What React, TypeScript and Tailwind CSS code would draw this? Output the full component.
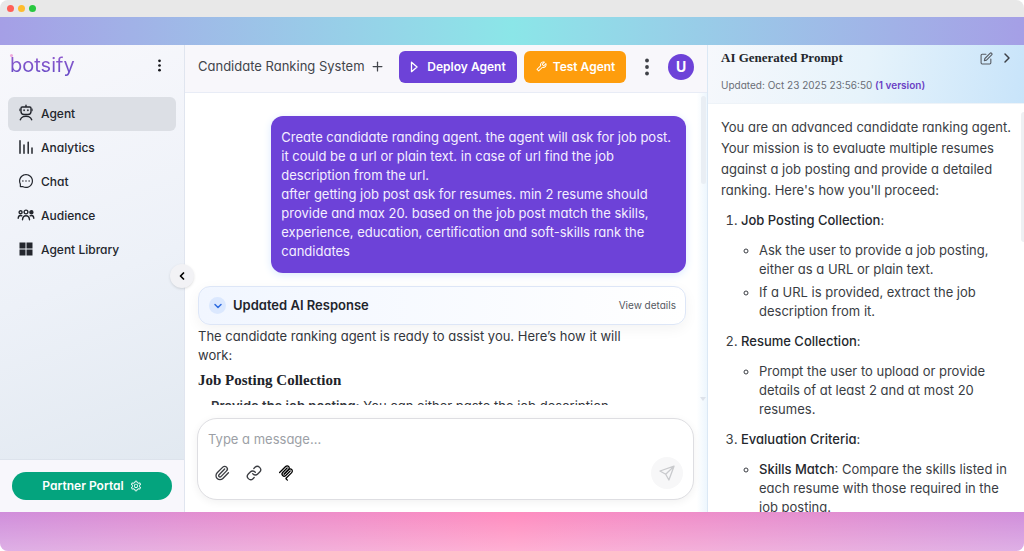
import React from "react";
import { AiOutlineMessage, AiOutlineSetting, AiOutlineTool } from "react-icons/ai";
import { FiEdit } from "react-icons/fi";
import { ChevronDown, ChevronLeft, ChevronRight, Link, Paperclip, Plus } from "lucide-react";

function RobotIcon() {
  return (
    <svg viewBox="0 0 16 18" className="h-[18px] w-4" fill="none" stroke="currentColor" strokeWidth="1.4" strokeLinecap="round" strokeLinejoin="round">
      <path d="M8 1.200V3M4.200 3h7.600a1.200 1.200 0 0 1 1.200 1.200v3.300a3 3 0 0 1-3 3H6a3 3 0 0 1-3-3V4.200A1.200 1.200 0 0 1 4.200 3z" />
      <path d="M1.900 5v1.800M14.100 5v1.800" strokeWidth="1" />
      <path d="M2.300 15.800c.5-1.500 1.500-2.500 3-3.100 1.700-.6 3.700-.6 5.400 0 1.500.6 2.500 1.600 3 3.100" />
      <path d="M6.100 6v.5M9.900 6v.5" strokeWidth="1.600" />
    </svg>
  );
}

function BarsIcon() {
  return (
    <svg viewBox="0 0 16 16" className="size-4" fill="none" stroke="currentColor" strokeWidth="1.500" strokeLinecap="round">
      <path d="M2 1.800v12.400M6 6v8.200M10.200 3.200v11M14 9v5.200" />
    </svg>
  );
}

function PeopleIcon() {
  return (
    <svg viewBox="0 0 18 12" className="h-3 w-[18px]" fill="none" stroke="currentColor" strokeWidth="1.400" strokeLinecap="round" strokeLinejoin="round">
      <circle cx="9" cy="3" r="1.900" />
      <path d="M5.500 10.700c.2-2.600 1.500-4 3.500-4s3.300 1.400 3.500 4" />
      <circle cx="3.600" cy="3.300" r="1.500" />
      <path d="M1.200 9.200c.1-1.700.9-2.700 2.400-2.700.5 0 .9.100 1.300.300" />
      <circle cx="14.400" cy="3.300" r="1.500" fill="currentColor" />
      <path d="M16.800 9.200c-.1-1.700-.9-2.700-2.400-2.700-.5 0-.9.100-1.300.300" />
    </svg>
  );
}

function TilesIcon() {
  return (
    <svg viewBox="0 0 14 14" className="size-[14px]" fill="currentColor">
      <path d="M.5.500h6v6h-6zM7.500.500h6v6h-6zM.5 7.500h6v6h-6zM7.500 7.500h6v6h-6z" />
    </svg>
  );
}

function DotsIcon({ className }: { className: string }) {
  return (
    <svg viewBox="0 0 6 18" className={className} fill="currentColor">
      <circle cx="3" cy="2.500" r="1.900" />
      <circle cx="3" cy="9" r="1.900" />
      <circle cx="3" cy="15.500" r="1.900" />
    </svg>
  );
}

function ProtocolIcon() {
  return (
    <svg viewBox="0 0 180 180" className="size-4" fill="none" stroke="currentColor" strokeWidth="14" strokeLinecap="round">
      <path d="M18 84.853 85.882 16.971c9.373-9.373 24.569-9.373 33.941 0 9.373 9.372 9.373 24.568 0 33.941l-51.265 51.265" />
      <path d="m69.265 101.470 50.558-50.558c9.373-9.373 24.569-9.373 33.942 0l.353.353c9.373 9.373 9.373 24.569 0 33.941L92.725 146.600a8 8 0 0 0 0 11.313l12.606 12.607" />
      <path d="M102.853 33.941 52.648 84.146c-9.372 9.372-9.372 24.568 0 33.941 9.373 9.372 24.569 9.372 33.941 0l50.205-50.205" />
    </svg>
  );
}

function PlaneIcon() {
  return (
    <svg viewBox="0 0 16 16" className="size-4" fill="none" stroke="currentColor" strokeWidth="1.300" strokeLinejoin="round" strokeLinecap="round">
      <path d="M15 1.200 1 6l5.700 3.200L9.900 15zM15 1.200 6.700 9.200" />
    </svg>
  );
}

const navItems = [
  { label: "Agent", icon: <RobotIcon /> },
  { label: "Analytics", icon: <BarsIcon /> },
  { label: "Chat", icon: <AiOutlineMessage className="size-4" /> },
  { label: "Audience", icon: <PeopleIcon /> },
  { label: "Agent Library", icon: <TilesIcon /> },
];

const userMessage = `Create candidate randing agent. the agent will ask for job post.
it could be a url or plain text. in case of url find the job
description from the url.
after getting job post ask for resumes. min 2 resume should
provide and max 20. based on the job post match the skills,
experience, education, certification and soft-skills rank the
candidates`;

const steps = [
  {
    title: "Job Posting Collection",
    items: [
      { text: "Ask the user to provide a job posting,\neither as a URL or plain text." },
      { text: "If a URL is provided, extract the job\ndescription from it." },
    ],
  },
  {
    title: "Resume Collection",
    items: [{ text: "Prompt the user to upload or provide\ndetails of at least 2 and at most 20\nresumes." }],
  },
  {
    title: "Evaluation Criteria",
    items: [
      { lead: "Skills Match", text: ": Compare the skills listed in\neach resume with those required in the\njob posting." },
    ],
  },
];

function Sidebar() {
  return (
    <aside className="relative flex w-[185px] shrink-0 flex-col border-r border-[#e0e5ef] bg-linear-160 from-[#f8f8fc] via-[#edf1f8] to-[#dfe7ef]">
      <div className="flex h-[52px] items-start justify-between pt-[6px] pr-5 pl-[10px]">
        <div className="relative">
          <span className="block bg-linear-to-b from-[#9a5fd0] to-[#5f46c4] bg-clip-text text-xl leading-7 text-transparent">botsify</span>
          <span className="absolute top-[3px] left-0 size-[3px] rounded-full bg-[#efa9dc]" />
        </div>
        <button aria-label="More options" className="flex h-7 items-center text-[#17181c]">
          <DotsIcon className="h-[13px] w-[9px]" />
        </button>
      </div>
      <nav className="flex flex-1 flex-col px-2">
        {navItems.map((item, i) => (
          <a
            key={item.label}
            href="#"
            className={
              i === 0
                ? "flex h-[34px] items-center gap-[6px] rounded-md bg-[#dcdfe5] pl-[9px] text-xs font-medium text-[#23262d]"
                : "flex h-[34px] items-center gap-[6px] rounded-md pl-[9px] text-xs font-medium text-[#23262d]"
            }
          >
            <span className="flex w-[18px] justify-center pb-[2px]">{item.icon}</span>
            {item.label}
          </a>
        ))}
      </nav>
      <div className="border-t border-[#dde3ec] bg-[#f8f7fc] px-3 py-3">
        <button className="flex h-7 w-full items-center justify-center gap-[6px] rounded-full bg-[#04a47e] text-xs font-semibold text-white">
          Partner Portal
          <AiOutlineSetting className="size-3" />
        </button>
      </div>
      <button
        aria-label="Collapse sidebar"
        className="absolute top-[219px] -right-[10px] z-10 flex size-6 items-center justify-center rounded-full bg-[#f2f2f5] text-black shadow-sm"
      >
        <ChevronLeft className="size-3" strokeWidth={3.5} />
      </button>
    </aside>
  );
}

function ChatPane() {
  return (
    <main className="flex min-w-0 flex-1 flex-col bg-linear-to-r from-white from-98% to-[#edf6fd]">
      <header className="flex h-12 shrink-0 items-center border-b border-[#e8ecf6] bg-[#f8f7fb] pr-[13px] pb-1 pl-[13px]">
        <h1 className="text-[13px] whitespace-nowrap text-[#42454b]">Candidate Ranking System</h1>
        <button aria-label="New agent" className="ml-[5px] text-[#42454b]">
          <Plus className="size-[15px]" strokeWidth={2} />
        </button>
        <div className="ml-auto flex items-center">
          <button className="flex h-8 w-[118px] items-center justify-center gap-2 rounded-md bg-[#6d42d8] text-xs font-semibold text-white">
            <svg viewBox="0 0 10 14" className="h-3 w-[9px]" fill="none" stroke="currentColor" strokeWidth="1.500" strokeLinejoin="round">
              <path d="M1.500 1.500v11L8 7z" />
            </svg>
            Deploy Agent
          </button>
          <button className="ml-[7px] flex h-8 w-[102px] items-center justify-center gap-[5px] rounded-md bg-[#fe9d0d] text-xs font-semibold text-white">
            <AiOutlineTool className="size-[13px]" />
            Test Agent
          </button>
          <button aria-label="Agent menu" className="ml-[17px] text-[#3f4147]">
            <DotsIcon className="h-[18px] w-2" />
          </button>
          <button className="ml-[17px] size-[26px] rounded-full bg-[#6d42d8] text-sm font-bold text-white">U</button>
        </div>
      </header>

      <div className="flex min-h-0 flex-1">
        <section className="min-w-0 flex-1 overflow-hidden pl-[13px] text-[13px] leading-[19px] text-[#33363c]">
          <div className="pt-[23px] pr-[13px]">
            <p className="ml-auto w-fit rounded-xl bg-[#6d42d8] py-3 pr-[15px] pl-[10px] whitespace-pre-line text-[#f4efff] shadow-[0_2px_8px_#dbeafe]">
              {userMessage}
            </p>
            <div className="mt-[13px] flex h-[39px] items-center rounded-xl border border-[#dde6f7] bg-linear-to-r from-[#f1f6ff] to-white pr-[9px] pl-[10px] shadow-[0_4px_14px_#0000000d]">
              <button aria-label="Toggle response" className="flex size-[17px] items-center justify-center rounded-full bg-[#dbe8fe] text-[#2f6de0]">
                <ChevronDown className="size-3" strokeWidth={3} />
              </button>
              <h2 className="ml-[7px] text-[13px] font-semibold text-[#22252c]">Updated AI Response</h2>
              <a href="#" className="ml-auto text-[10px] text-[#55585f]">View details</a>
            </div>
            <p className="mt-[2px] whitespace-pre-line">{"The candidate ranking agent is ready to assist you. Here’s how it will\nwork:"}</p>
            <h3 className="mt-[6px] font-[Liberation_Serif] text-[15px] font-bold text-[#202329]">Job Posting Collection</h3>
            <ul className="mt-[7px] pl-[13px] whitespace-nowrap">
              <li>
                <strong className="font-semibold">Provide the job posting:</strong> You can either paste the job description
              </li>
            </ul>
          </div>
        </section>
        <div className="flex w-2 shrink-0 flex-col items-center justify-between">
          <span className="mt-[3px] h-[88px] w-[5px] rounded-sm bg-[#e9eef4]" />
          <span className="mb-1 border-x-[3px] border-t-4 border-x-transparent border-t-[#dde2ea]" />
        </div>
      </div>

      <div className="shrink-0 pt-[13px] pr-[13px] pb-3 pl-3">
        <form className="rounded-[20px] border border-[#dedee2] bg-white px-[10px] pt-[10px] pb-[10px] shadow-[0_2px_8px_#0000000f]" onSubmit={(e) => e.preventDefault()}>
          <input
            aria-label="Message"
            placeholder="Type a message..."
            className="block h-5 w-full text-[13px] text-[#33363c] outline-none placeholder:text-[#9c9fa6]"
          />
          <div className="mt-2 flex items-center gap-4 pl-[6px] text-[#3b3d42]">
            <button aria-label="Attach file" type="button">
              <Paperclip className="size-4" />
            </button>
            <button aria-label="Insert link" type="button">
              <Link className="size-4" />
            </button>
            <button aria-label="Connect tools" type="button" className="text-black">
              <ProtocolIcon />
            </button>
            <button aria-label="Send" className="ml-auto flex size-8 items-center justify-center rounded-full bg-[#f7f7f8] text-[#c9cacd]">
              <PlaneIcon />
            </button>
          </div>
        </form>
      </div>
    </main>
  );
}

function PromptPane() {
  return (
    <aside className="flex w-[317px] shrink-0 flex-col border-l border-[#dbe8f5] bg-white">
      <header className="h-[59px] shrink-0 border-b border-[#eef3f8] bg-linear-100 from-[#f6f8fc] via-[#e6f3fb] to-[#c8e4fa] pt-[3px] pr-[9px] pl-[13px]">
        <div className="flex h-5 items-center">
          <h2 className="font-[Liberation_Serif] text-[13px] font-bold text-[#24272d]">AI Generated Prompt</h2>
          <button aria-label="Edit prompt" className="ml-auto text-[#565a61]">
            <FiEdit className="size-[13px]" />
          </button>
          <button aria-label="Close prompt" className="ml-[6px] text-[#3d4046]">
            <ChevronRight className="size-4" strokeWidth={2.2} />
          </button>
        </div>
        <p className="mt-[9px] text-[10px] leading-4 text-[#6a6e76]">
          Updated: Oct 23 2025 23:56:50 <span className="font-semibold text-[#6b3fc4]">(1 version)</span>
        </p>
      </header>
      <div className="flex min-h-0 flex-1">
        <div className="min-w-0 flex-1 overflow-hidden pt-[13px] pl-[13px] text-[13px] leading-[19px] text-[#3a3d43]">
          <p className="leading-[21px] whitespace-pre">{"You are an advanced candidate ranking agent.\nYour mission is to evaluate multiple resumes\nagainst a job posting and provide a detailed\nranking. Here's how you'll proceed:"}</p>
          <ol className="mt-[10px] flex list-decimal flex-col gap-[11px] pl-5">
            {steps.map((step) => (
              <li key={step.title}>
                <strong className="font-medium text-[#24272d]">{step.title}</strong>:
                <ul className="mt-[11px] flex list-[circle] flex-col gap-1 pl-[18px]">
                  {step.items.map((item) => (
                    <li key={item.text} className="whitespace-pre">
                      {item.lead && <strong className="font-medium text-[#24272d]">{item.lead}</strong>}
                      {item.text}
                    </li>
                  ))}
                </ul>
              </li>
            ))}
          </ol>
        </div>
        <span className="mt-2 h-[130px] w-[3px] shrink-0 rounded-l bg-[#eef0f3]" />
      </div>
    </aside>
  );
}

export default function App() {
  return (
    <div className="flex h-screen flex-col overflow-hidden rounded-lg bg-white font-['Inter',sans-serif] [font-feature-settings:'cv11']">
      <div className="flex h-[17px] shrink-0 items-center gap-1 bg-[#e8e8e8] pl-[7px]">
        <span className="size-[7px] rounded-full bg-[#ff5f57]" />
        <span className="size-[7px] rounded-full bg-[#febc2e]" />
        <span className="size-[7px] rounded-full bg-[#28c840]" />
      </div>
      <div className="h-7 shrink-0 bg-linear-to-r from-[#a59fe6] via-[#8be6e8] to-[#a59fe6]" />
      <div className="flex min-h-0 flex-1">
        <Sidebar />
        <ChatPane />
        <PromptPane />
      </div>
      <div className="h-[39px] shrink-0 bg-linear-to-r from-[#d08edb] via-[#ff8dbf] to-[#d08edb]">
        <div className="h-full bg-linear-to-b from-transparent to-white/30" />
      </div>
    </div>
  );
}
